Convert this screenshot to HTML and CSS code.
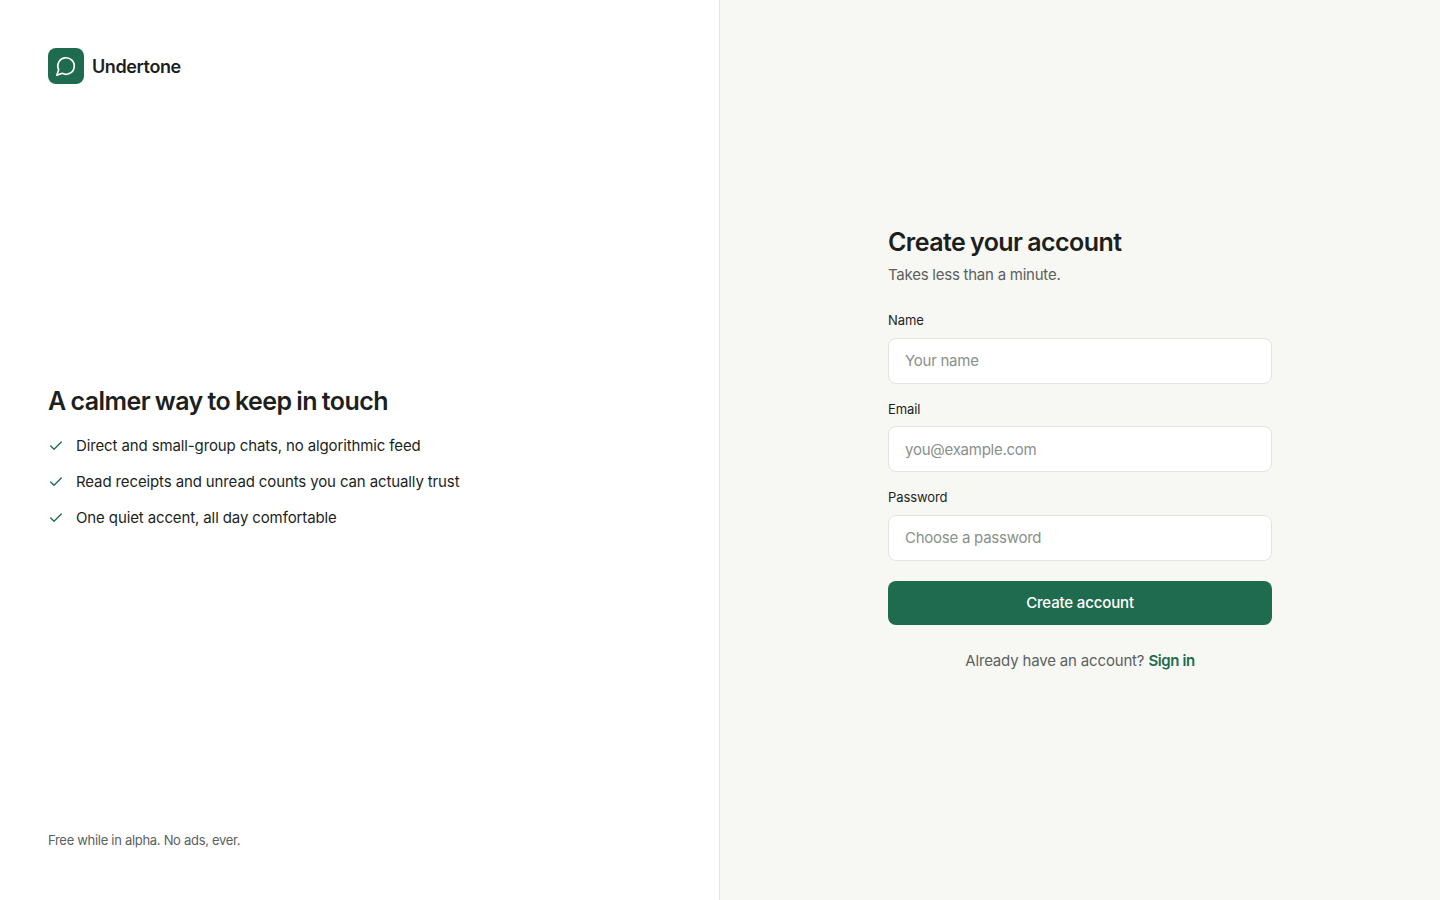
FILE: index.html
```html
<!DOCTYPE html>
<html lang="en">
<head>
    <meta charset="UTF-8">
    <meta name="viewport" content="width=device-width, initial-scale=1.0">
    <title>Undertone - Sign up</title>
    <link rel="stylesheet" href="styles.css">
</head>
<body>
    <div class="page">
        <!-- Left panel -->
        <section class="intro">
            <div class="brand">
                <div class="brand-mark">
                    <svg width="22" height="22" viewBox="0 0 24 24" fill="none" stroke="#fff" stroke-width="1.8" stroke-linecap="round" stroke-linejoin="round">
                        <path d="M7.9 20A9 9 0 1 0 4 16.1L2 22Z"/>
                    </svg>
                </div>
                <span class="brand-name">Undertone</span>
            </div>

            <div class="pitch">
                <h2 class="pitch-title">A calmer way to keep in touch</h2>
                <ul class="pitch-list">
                    <li>
                        <svg class="check" width="16" height="16" viewBox="0 0 24 24" fill="none" stroke="#1f6b4f" stroke-width="2" stroke-linecap="round" stroke-linejoin="round"><path d="M20 6 9 17l-5-5"/></svg>
                        Direct and small-group chats, no algorithmic feed
                    </li>
                    <li>
                        <svg class="check" width="16" height="16" viewBox="0 0 24 24" fill="none" stroke="#1f6b4f" stroke-width="2" stroke-linecap="round" stroke-linejoin="round"><path d="M20 6 9 17l-5-5"/></svg>
                        Read receipts and unread counts you can actually trust
                    </li>
                    <li>
                        <svg class="check" width="16" height="16" viewBox="0 0 24 24" fill="none" stroke="#1f6b4f" stroke-width="2" stroke-linecap="round" stroke-linejoin="round"><path d="M20 6 9 17l-5-5"/></svg>
                        One quiet accent, all day comfortable
                    </li>
                </ul>
            </div>

            <p class="note">Free while in alpha. No ads, ever.</p>
        </section>

        <!-- Sign up form -->
        <section class="signup">
            <div class="signup-box">
                <h1 class="signup-title">Create your account</h1>
                <p class="signup-sub">Takes less than a minute.</p>

                <form class="signup-form">
                    <div class="field">
                        <label for="name">Name</label>
                        <input type="text" id="name" placeholder="Your name">
                    </div>
                    <div class="field">
                        <label for="email">Email</label>
                        <input type="email" id="email" placeholder="you@example.com">
                    </div>
                    <div class="field">
                        <label for="password">Password</label>
                        <input type="password" id="password" placeholder="Choose a password">
                    </div>
                    <button type="button" class="submit-btn">Create account</button>
                </form>

                <p class="signin">Already have an account? <a href="#">Sign in</a></p>
            </div>
        </section>
    </div>
</body>
</html>
```

FILE: styles.css
```css
* {
    box-sizing: border-box;
}

body {
    margin: 0;
    font-family: Inter, "Noto Sans", sans-serif;
    color: #1c1f1d;
    background-color: #fff;
}

.page {
    display: grid;
    grid-template-columns: 1fr 1fr;
    height: 100vh;
}

.intro {
    display: flex;
    flex-direction: column;
    justify-content: space-between;
    padding: 48px;
    border-right: 1px solid #e4e4df;
}

.brand {
    display: flex;
    align-items: center;
    gap: 8px;
}

.brand-mark {
    display: flex;
    align-items: center;
    justify-content: center;
    width: 36px;
    height: 36px;
    border-radius: 8px;
    background-color: #1f6b4f;
}

.brand-name {
    font-size: 18px;
    font-weight: 600;
    letter-spacing: -0.4px;
}

.pitch-title {
    margin: 0 0 17px;
    font-size: 25px;
    line-height: 32px;
    font-weight: 600;
    letter-spacing: -0.55px;
    word-spacing: -1px;
}

.pitch-list {
    display: flex;
    flex-direction: column;
    gap: 12px;
    margin: 0;
    padding: 0;
    list-style: none;
}

.pitch-list li {
    display: flex;
    align-items: center;
    gap: 12px;
    font-size: 15px;
    line-height: 24px;
    letter-spacing: -0.12px;
}

.note {
    margin: 0 0 2px;
    font-size: 13px;
    line-height: 20px;
    color: #5c615e;
    letter-spacing: -0.3px;
}

.signup {
    display: flex;
    align-items: center;
    justify-content: center;
    background-color: #f7f7f3;
}

.signup-box {
    width: 384px;
    padding-bottom: 1px;
}

.signup-title {
    margin: 0 0 5px;
    font-size: 25px;
    line-height: 32px;
    font-weight: 600;
    letter-spacing: -0.55px;
    word-spacing: -1px;
}

.signup-sub {
    margin: 0 0 24px;
    font-size: 15px;
    line-height: 24px;
    color: #5c615e;
    letter-spacing: -0.24px;
}

.signup-form {
    display: flex;
    flex-direction: column;
    gap: 16px;
}

.field {
    display: flex;
    flex-direction: column;
    gap: 7px;
}

.field label {
    font-size: 13px;
    line-height: 19.5px;
    font-weight: 400;
    letter-spacing: -0.1px;
}

.field input {
    height: 46px;
    padding: 0 16px;
    border: 1px solid #e4e4df;
    border-radius: 8px;
    background-color: #fff;
    font-family: inherit;
    font-size: 15px;
    letter-spacing: -0.25px;
    color: #1c1f1d;
}

.field input::placeholder {
    color: #8a8f8c;
}

.submit-btn {
    height: 44px;
    margin-top: 4px;
    border: none;
    border-radius: 8px;
    background-color: #1f6b4f;
    color: #fff;
    font-family: inherit;
    font-size: 15px;
    font-weight: 500;
    letter-spacing: -0.15px;
    cursor: pointer;
}

.signin {
    margin: 24px 0 0;
    font-size: 15px;
    line-height: 24px;
    text-align: center;
    color: #5c615e;
    letter-spacing: -0.17px;
}

.signin a {
    color: #1f6b4f;
    font-weight: 600;
    letter-spacing: -0.4px;
    text-decoration: none;
}
```
